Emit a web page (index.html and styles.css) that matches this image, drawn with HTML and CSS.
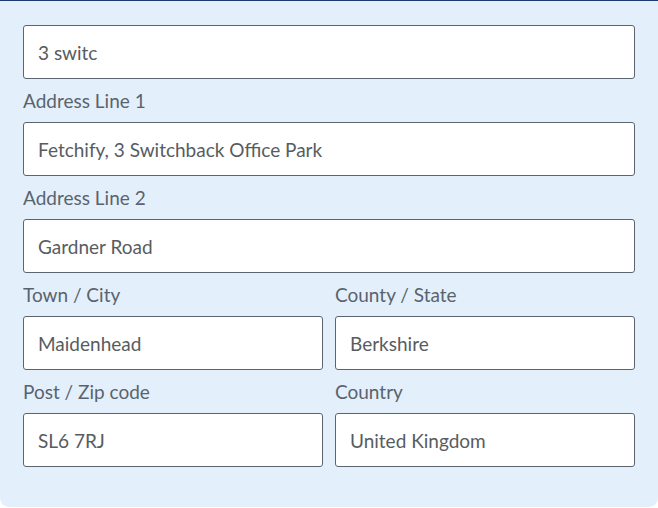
FILE: index.html
```html
<!DOCTYPE html>
<html lang="en">
<head>
<meta charset="utf-8">
<title>Address form</title>
<link rel="stylesheet" href="styles.css">
</head>
<body>
<form class="panel">
  <div class="field">
    <input class="input" type="text" value="3 switc">
  </div>
  <div class="field">
    <label class="label">Address Line 1</label>
    <input class="input" type="text" value="Fetchify, 3 Switchback Office Park">
  </div>
  <div class="field">
    <label class="label">Address Line 2</label>
    <input class="input" type="text" value="Gardner Road">
  </div>
  <div class="row">
    <div class="field">
      <label class="label">Town / City</label>
      <input class="input" type="text" value="Maidenhead">
    </div>
    <div class="field">
      <label class="label">County / State</label>
      <input class="input" type="text" value="Berkshire">
    </div>
  </div>
  <div class="row">
    <div class="field">
      <label class="label">Post / Zip code</label>
      <input class="input" type="text" value="SL6 7RJ">
    </div>
    <div class="field">
      <label class="label">Country</label>
      <input class="input" type="text" value="United Kingdom">
    </div>
  </div>
</form>
</body>
</html>
```

FILE: styles.css
```css
html, body {
  margin: 0;
  padding: 0;
  background: #ffffff;
}

body {
  font-family: Lato, "Liberation Sans", sans-serif;
}

.panel {
  box-sizing: border-box;
  width: 658px;
  height: 507px;
  margin: 0;
  background: #e3f0fb;
  border-top: 1px solid #1f3a6e;
  border-radius: 0 0 9px 9px;
  padding: 24px 23px 0 23px;
  display: flex;
  flex-direction: column;
  gap: 9px;
}

.row {
  display: grid;
  grid-template-columns: 300px 300px;
  column-gap: 12px;
}

.field {
  display: flex;
  flex-direction: column;
}

.label {
  font-size: 19px;
  line-height: 22px;
  color: #5a636d;
  margin-top: 2px;
  margin-bottom: 10px;
}

.input {
  box-sizing: border-box;
  height: 54px;
  width: 100%;
  margin: 0;
  padding: 0 14px;
  border: 1px solid #5b6570;
  border-radius: 3px;
  background: #ffffff;
  font-family: Lato, "Liberation Sans", sans-serif;
  font-size: 19px;
  color: #575c61;
  outline: none;
}
```
